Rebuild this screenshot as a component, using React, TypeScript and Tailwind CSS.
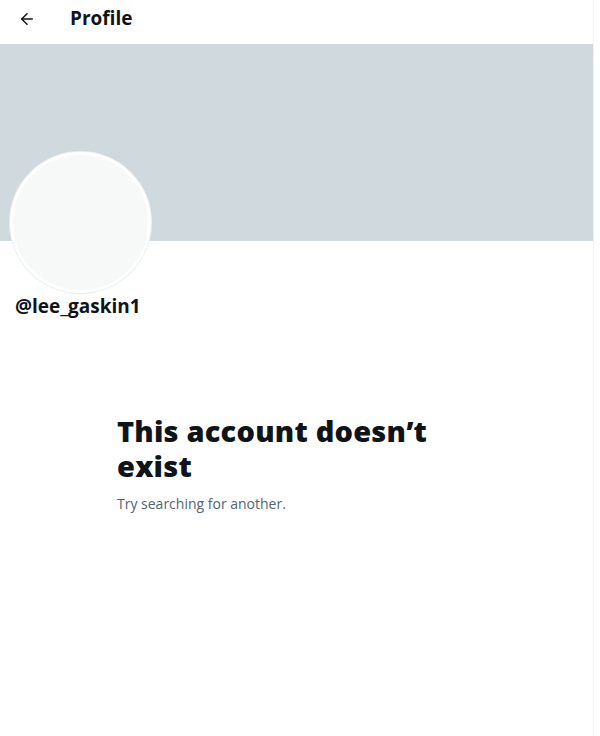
import { ArrowLeft } from "lucide-react";

export default function App() {
  return (
    <div className="min-h-[736px] w-[600px] bg-white font-['Open_Sans','Noto_Sans',sans-serif] text-[#0f1419]">
      <div className="min-h-[736px] w-[594px] border-r border-[#eff3f4]">
        {/* Top bar */}
        <div className="flex h-[44px] items-center pb-[7px]">
          <div className="flex w-[70px] items-center pl-[18px]">
            <ArrowLeft size={18} strokeWidth={2} />
          </div>
          <h1 className="text-[19px] font-bold leading-none">Profile</h1>
        </div>

        {/* Banner */}
        <div className="h-[197px] bg-[#cfd9de]" />

        {/* Avatar + handle */}
        <div className="px-[10px]">
          <div className="mt-[-89px] h-[141px] w-[141px] rounded-full border-[3px] border-white bg-[#f7f9f9] shadow-[0_0_0_1px_#eceeee]" />
          <div className="mt-[1px] pl-[5px] text-[19px] font-bold leading-[24px]">@lee_gaskin1</div>
        </div>

        {/* Empty state */}
        <div className="mt-[95px] pl-[117px]">
          <h2 className="w-[330px] text-[29px] font-extrabold leading-[35px] tracking-[0.2px]">
            This account doesn’t exist
          </h2>
          <p className="mt-[11px] text-[14px] leading-[20px] text-[#536471]">Try searching for another.</p>
        </div>
      </div>
    </div>
  );
}
